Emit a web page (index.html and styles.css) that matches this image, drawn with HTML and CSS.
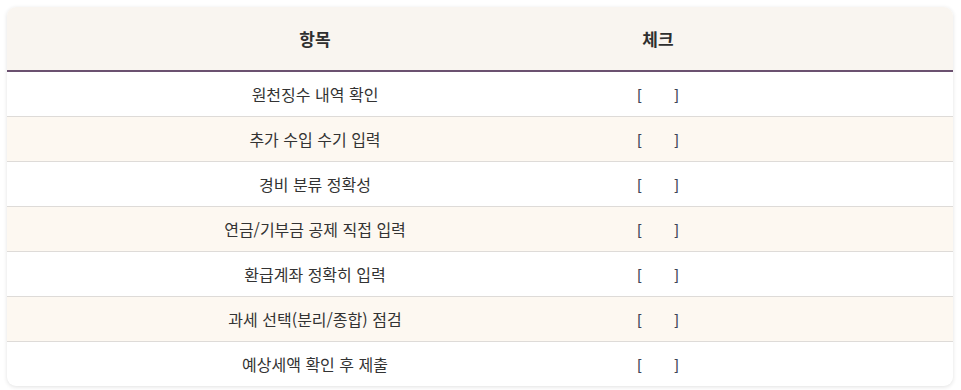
FILE: index.html
```html
<!DOCTYPE html>
<html lang="ko">
<head>
<meta charset="utf-8">
<link rel="stylesheet" href="styles.css">
</head>
<body>
<div class="card">
  <table class="checklist">
    <colgroup><col class="c-item"><col class="c-check"><col></colgroup>
    <thead>
      <tr><th>항목</th><th>체크</th><th></th></tr>
    </thead>
    <tbody>
      <tr><td>원천징수 내역 확인</td><td><span class="box"><span>[</span><span>]</span></span></td><td></td></tr>
      <tr><td>추가 수입 수기 입력</td><td><span class="box"><span>[</span><span>]</span></span></td><td></td></tr>
      <tr><td>경비 분류 정확성</td><td><span class="box"><span>[</span><span>]</span></span></td><td></td></tr>
      <tr><td>연금/기부금 공제 직접 입력</td><td><span class="box"><span>[</span><span>]</span></span></td><td></td></tr>
      <tr><td>환급계좌 정확히 입력</td><td><span class="box"><span>[</span><span>]</span></span></td><td></td></tr>
      <tr><td>과세 선택(분리/종합) 점검</td><td><span class="box"><span>[</span><span>]</span></span></td><td></td></tr>
      <tr><td>예상세액 확인 후 제출</td><td><span class="box"><span>[</span><span>]</span></span></td><td></td></tr>
    </tbody>
  </table>
</div>
</body>
</html>
```
FILE: styles.css
```css
html, body {
  margin: 0;
  padding: 0;
  background: #ffffff;
}
body {
  padding: 7px 8px 4px 7px;
  font-family: "Noto Sans CJK KR", "Noto Sans", sans-serif;
  color: #333333;
}
.card {
  width: 946px;
  border-radius: 9px;
  overflow: hidden;
  box-shadow: 0 1px 4px rgba(0, 0, 0, 0.12);
  background: #ffffff;
}
.checklist {
  width: 100%;
  border-collapse: collapse;
  table-layout: fixed;
}
.c-item { width: 616px; }
.c-check { width: 70px; }
.checklist th {
  height: 63px;
  padding: 0;
  background: #f9f5f0;
  font-size: 17px;
  line-height: 24px;
  font-weight: 700;
  color: #2f2f2f;
  text-align: center;
  border-bottom: 2px solid #6b5170;
}
.checklist td {
  height: 44px;
  padding: 0;
  font-size: 16px;
  line-height: 22px;
  color: #333333;
  text-align: center;
  border-bottom: 1px solid #dedbd8;
}
.checklist tbody tr:nth-child(even) td {
  background: #fdf8f1;
}
.checklist tbody tr:last-child td {
  border-bottom: none;
}
.box {
  display: inline-flex;
  gap: 33px;
  color: #3f4558;
  font-family: "Liberation Sans", sans-serif;
  font-size: 15px;
}
```
